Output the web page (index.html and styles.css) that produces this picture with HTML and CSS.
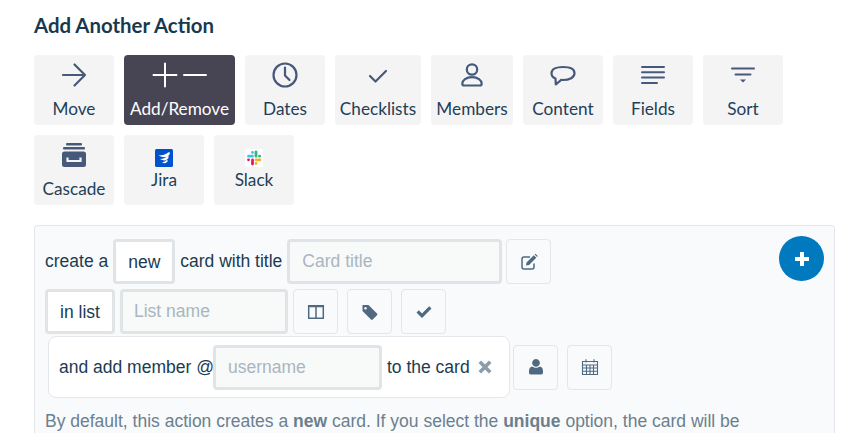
FILE: index.html
```html
<!DOCTYPE html>
<html lang="en">
<head>
<meta charset="utf-8">
<title>Add Another Action</title>
<link rel="stylesheet" href="styles.css">
</head>
<body>
<main class="page">
  <h2 class="title">Add Another Action</h2>
  <div class="tiles">
    <div class="tile"><svg class="ic" viewBox="0 0 30 32"><path class="s" d="M4 16H26M15.500 5.500L26 16L15.500 26.500"/></svg><span>Move</span></div>
    <div class="tile tile-active"><svg class="ic ic-wide" viewBox="0 0 60 32"><path class="s s-white" d="M3.500 16H26.500M15 4.500V27.500M34 16H56"/></svg><span>Add/Remove</span></div>
    <div class="tile"><svg class="ic" viewBox="0 0 30 32"><circle class="s" cx="15" cy="16" r="11.500"/><path class="s" d="M15 8.500V16.500L19.500 21"/></svg><span>Dates</span></div>
    <div class="tile tile-checklists"><svg class="ic" viewBox="0 0 30 32"><path class="s" d="M7 17L12.500 22.500L23 12"/></svg><span>Checklists</span></div>
    <div class="tile tile-members"><svg class="ic" viewBox="0 0 30 32"><circle class="s" cx="15" cy="10.500" r="5.200"/><path class="s" d="M7 26.500c-1.200 0-1.700-.8-1.700-1.700 0-3.600 4-6.600 9.700-6.600s9.700 3 9.700 6.600c0 .9-.5 1.700-1.700 1.700z"/></svg><span>Members</span></div>
    <div class="tile"><svg class="ic" viewBox="0 0 30 32"><path class="s" d="M15 8C8.500 8 3.500 10.200 3.500 14.200c0 2.600 1.500 4.400 4 5.400l.3 5.900 5.400-4.600c.6.100 1.200.1 1.800.1 6.500 0 11.500-2.600 11.500-6.800S21.500 8 15 8z"/></svg><span>Content</span></div>
    <div class="tile"><svg class="ic" viewBox="0 0 30 32"><path class="s s-butt" d="M4 8H26M4 13.300H26M4 18.600H26M4 24H19"/></svg><span>Fields</span></div>
    <div class="tile"><svg class="ic" viewBox="0 0 30 32"><path class="s s-butt" d="M4 9.500H26M7.500 15.500H22.500"/><path class="f" d="M12 20.500h6l-3 3z"/></svg><span>Sort</span></div>
    <div class="tile"><svg class="ic" viewBox="0 0 30 32"><rect class="f" x="7" y="4" width="16" height="2.500" rx="1"/><rect class="f" x="4" y="8" width="22" height="2.500" rx="1"/><rect class="f" x="3" y="12.500" width="24" height="15.500" rx="2.500"/><path class="s s-tile" d="M8.500 18.500v3.500h13v-3.500"/></svg><span>Cascade</span></div>
    <div class="tile tile-brand"><svg class="ic-brand" viewBox="0 0 18 18"><rect width="18" height="18" rx="1.500" fill="#0052cc"/><path class="jira" d="M3.500 6.500C7.500 6.500 11 5.500 14 3L15 4C14 8.500 9 9.500 3.500 6.500z"/><path class="jira" d="M5 10C8 10 10.500 9 13 7L13.800 8C12.500 11.500 9 12.500 5 10z"/><path class="jira" d="M7 13.500C9 13 10.800 12.200 12 10.800L12.800 11.700C12 14 9.500 15 7 13.500z"/></svg><span>Jira</span></div>
    <div class="tile tile-brand"><svg class="ic-brand" viewBox="0 0 18 18"><rect width="18" height="18" rx="1.500" fill="#fff"/><path class="sl sl-b" d="M3.500 7.200H7.500M7.500 3.500V3.600"/><path class="sl sl-g" d="M11 3V7.200M14.500 7.200H14.600"/><path class="sl sl-y" d="M11 10.800H15M11 14.500V14.600"/><path class="sl sl-r" d="M7.500 11V15M3.500 10.800H3.600"/></svg><span>Slack</span></div>
  </div>

  <section class="panel">
    <button class="add-btn" type="button" aria-label="Add"><svg viewBox="0 0 14 14"><path d="M7 0V14M0 7H14"/></svg></button>
    <div class="row">
      <span class="label">create a</span>
      <span class="choice choice-new">new</span>
      <span class="label">card with title</span>
      <span class="field field-title">Card title</span>
      <span class="icon-btn icon-btn-tight"><svg viewBox="0 0 18 18"><path class="o" d="M14 10.500V14a2 2 0 0 1-2 2H4a2 2 0 0 1-2-2V6a2 2 0 0 1 2-2h6"/><path class="fi" d="M6.500 9.500L13.800 2.200l2.500 2.500-7.300 7.300-3 .6zM14.600 1.400l.9-.6 2.300 2.300-.7 1z"/></svg></span>
    </div>
    <div class="row">
      <span class="choice choice-list">in list</span>
      <span class="field field-list">List name</span>
      <span class="icon-btn"><svg viewBox="0 0 18 18"><path class="o" d="M1.700 2.700H16.300V15.300H1.700zM9 2.700V15.300M1.700 3.500H16.300"/></svg></span>
      <span class="icon-btn icon-btn-far"><svg viewBox="0 0 18 18"><path class="fi" d="M1.500 2h6l8.500 8.500c.5.500.5 1.200 0 1.700l-4.300 4.300c-.5.500-1.200.5-1.700 0L1.500 8zM4.500 4a1.300 1.300 0 1 0 .01 0z" fill-rule="evenodd"/></svg></span>
      <span class="icon-btn icon-btn-far"><svg viewBox="0 0 18 18"><path class="fi" d="M1.500 9.500L3.800 7.200l3.200 3.200 7.200-7.200 2.300 2.300-9.500 9.500z"/></svg></span>
    </div>
    <div class="row row-member">
      <div class="member-box">
        <span>and add member @</span>
        <span class="field field-user">username</span>
        <span>to the card</span>
        <svg class="remove" viewBox="0 0 14 14"><path d="M1.800 1.800L12.200 12.200M12.200 1.800L1.800 12.200"/></svg>
      </div>
      <span class="icon-btn icon-btn-near"><svg viewBox="0 0 18 18"><path class="fi" d="M9 1a3.900 3.900 0 1 1-.01 0zM5.300 8.500c1 .9 2.300 1.300 3.700 1.300s2.700-.4 3.700-1.300c2 .3 3.300 1.700 3.300 4.500v1.800c0 1-.7 1.700-1.700 1.700H3.700c-1 0-1.700-.7-1.700-1.700V13c0-2.800 1.300-4.200 3.300-4.500z"/></svg></span>
      <span class="icon-btn icon-btn-far"><svg viewBox="0 0 18 18"><path class="o o-thin" d="M1.500 3.500H16.500V16.500H1.500zM1.500 7H16.500M5 1.200V4.500M13 1.200V4.500M5.500 7V16.500M9 7V16.500M12.500 7V16.500M1.500 10H16.500M1.500 13.200H16.500"/></svg></span>
    </div>
    <p class="help">By default, this action creates a <b>new</b> card. If you select the <b>unique</b> option, the card will be</p>
  </section>
</main>
</body>
</html>
```
FILE: styles.css
```css
html, body {
  margin: 0;
  height: 433px;
  overflow: hidden;
  background: #fff;
}
.page {
  padding: 0 11px 0 34px;
  font-family: "Liberation Sans", Arial, sans-serif;
  color: #1a3c52;
}
.title {
  margin: 0;
  padding-top: 13px;
  height: 55px;
  box-sizing: border-box;
  font: 700 20.4px/24px Lato, sans-serif;
  color: #17394f;
}
.tiles {
  display: flex;
  flex-wrap: wrap;
  gap: 10px;
  width: 760px;
}
.tile {
  width: 80px;
  height: 70px;
  box-sizing: border-box;
  padding-top: 4px;
  display: flex;
  flex-direction: column;
  align-items: center;
  background: #f4f4f5;
  border-radius: 4px;
  font: 400 17.2px/24px Lato, sans-serif;
  color: #1f3f57;
  white-space: nowrap;
}
.tile-active {
  width: 111px;
  background: #474553;
  color: #fff;
}
.tile-checklists { width: 86px; }
.tile-members { width: 82px; }
.tile-brand { padding-top: 14px; }
.ic {
  width: 30px;
  height: 32px;
  margin-bottom: 6px;
  flex: none;
}
.ic-wide { width: 60px; }
.ic-brand {
  width: 18px;
  height: 18px;
  margin-bottom: 1px;
  flex: none;
}
.s {
  fill: none;
  stroke: #47597b;
  stroke-width: 2.2;
  stroke-linecap: round;
  stroke-linejoin: round;
}
.s-white { stroke: #fff; stroke-width: 2; }
.s-butt { stroke-width: 2; }
.s-tile { stroke: #f4f4f5; stroke-linecap: butt; stroke-linejoin: miter; }
.f { fill: #47597b; }
.jira { fill: #fff; }
.sl { fill: none; stroke-width: 2.800; stroke-linecap: round; }
.sl-b { stroke: #36c5f0; }
.sl-g { stroke: #2eb67d; }
.sl-y { stroke: #ecb22e; }
.sl-r { stroke: #e01e5a; }

.panel {
  position: relative;
  margin-top: 20px;
  height: 208px;
  box-sizing: border-box;
  padding: 13px 10px 0;
  background: #f9fafc;
  border: 1px solid #e3e6ea;
  border-bottom: 0;
  border-radius: 4px 4px 0 0;
  font-size: 17.5px;
  line-height: 24px;
  color: #1a3c52;
}
.add-btn {
  position: absolute;
  top: 10px;
  right: 10px;
  width: 45px;
  height: 45px;
  padding: 0;
  border: 0;
  border-radius: 50%;
  background: #0079bf;
  display: flex;
  align-items: center;
  justify-content: center;
}
.add-btn svg { width: 14px; height: 14px; }
.add-btn path { fill: none; stroke: #fff; stroke-width: 4; }
.row {
  display: flex;
  align-items: center;
  gap: 5px;
  height: 45px;
  margin-bottom: 5px;
}
.row-member {
  height: 62px;
  margin: -3px 0 0 3px;
  gap: 0;
}
.label { padding-bottom: 2px; }
.choice, .field {
  display: flex;
  align-items: center;
  height: 45px;
  box-sizing: border-box;
  border: 3px solid #e0e4e6;
  border-radius: 4px;
}
.choice {
  justify-content: center;
  background: #fff;
}
.choice-new { width: 62px; }
.choice-list { width: 70px; }
.field {
  padding-left: 11px;
  padding-bottom: 2px;
  background: #f8f9f9;
  color: #a9b6c0;
}
.field-title { width: 215px; padding-left: 12px; }
.field-list { width: 168px; }
.field-user { width: 169px; margin: 0 5px 0 -1px; padding: 0 0 0 12px; }
.icon-btn {
  display: flex;
  align-items: center;
  justify-content: center;
  width: 45px;
  height: 45px;
  box-sizing: border-box;
  flex: none;
  border: 1px solid #e3e6ea;
  border-radius: 4px;
  background: #f9fafc;
}
.icon-btn svg { width: 18px; height: 18px; }
.icon-btn-tight { margin-left: -1px; }
.icon-btn-far { margin-left: 4px; }
.row-member .icon-btn-far { margin-left: 9px; }
.icon-btn-near { margin-left: 3px; }
.o { fill: none; stroke: #4f6a80; stroke-width: 1.500; }
.o-thin { stroke-width: 1.100; }
.fi { fill: #4f6a80; }
.member-box {
  display: flex;
  align-items: center;
  width: 462px;
  height: 62px;
  box-sizing: border-box;
  padding-left: 10px;
  background: #fff;
  border: 1px solid #e3e6ea;
  border-radius: 8px;
  white-space: nowrap;
}
.remove {
  width: 14px;
  height: 14px;
  margin-left: 8px;
}
.remove path { fill: none; stroke: #8d9ca8; stroke-width: 3.600; }
.help {
  margin: 11px 0 0;
  color: #6b808e;
  white-space: nowrap;
}
.help b { font-weight: 700; }
```
